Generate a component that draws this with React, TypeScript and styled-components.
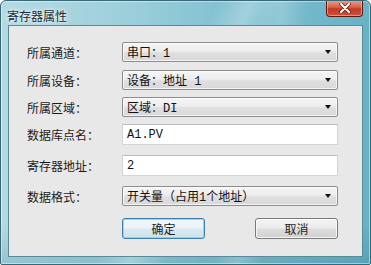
import React from 'react';
import styled, { createGlobalStyle } from 'styled-components';

const GlobalStyle = createGlobalStyle`
  html, body {
    margin: 0;
    padding: 0;
    background: #ffffff;
  }
  * {
    box-sizing: border-box;
  }
`;

const cjk = `"Noto Sans CJK SC", "Noto Sans", sans-serif`;
const mono = `"Liberation Mono", "Noto Sans CJK SC", monospace`;

const Window = styled.div`
  width: 371px;
  height: 265px;
  display: flex;
  flex-direction: column;
  border: 1px solid #3a6775;
  border-radius: 6px 6px 2px 2px;
  overflow: hidden;
  background:
    linear-gradient(115deg, rgba(255, 255, 255, 0) 44%, rgba(255, 255, 255, 0.28) 51%, rgba(255, 255, 255, 0) 58%),
    linear-gradient(100deg, rgba(255, 255, 255, 0) 62%, rgba(255, 255, 255, 0.2) 68%, rgba(255, 255, 255, 0) 74%),
    linear-gradient(180deg, rgba(0, 0, 0, 0) 85%, rgba(20, 90, 110, 0.18) 100%),
    linear-gradient(90deg, #b3dae3 0%, #9ccfdb 35%, #82c1d1 60%, #68b2c6 100%);
  box-shadow: inset 0 0 0 1px rgba(255, 255, 255, 0.45);
`;

const TitleBar = styled.div`
  height: 24px;
  display: flex;
  align-items: flex-start;
  padding-left: 6px;
  padding-right: 7px;
`;

const Title = styled.div`
  font-family: ${cjk};
  font-size: 12px;
  line-height: 14px;
  margin-top: 8px;
  color: #1a2a30;
  text-shadow: 0 0 6px rgba(255, 255, 255, 0.9), 0 0 3px rgba(255, 255, 255, 0.9);
`;

const CloseButton = styled.div`
  margin-left: auto;
  margin-top: -1px;
  width: 37px;
  height: 17px;
  display: flex;
  align-items: center;
  justify-content: center;
  border: 1px solid #5b1b12;
  border-top: none;
  border-radius: 0 0 4px 4px;
  background: linear-gradient(#eba597 0%, #d6604a 45%, #c13a22 55%, #cf5038 100%);
  box-shadow: inset 0 0 0 1px rgba(255, 210, 200, 0.5);
`;

const Client = styled.div`
  flex: 1;
  margin: 0 7px 7px 7px;
  background: #e8e8e8;
  border: 1px solid #5a8a97;
  padding: 16px 0 0 18px;
  display: flex;
  flex-direction: column;
`;

const Row = styled.div<{ $space: number }>`
  display: flex;
  align-items: center;
  margin-top: ${({ $space }) => $space}px;
`;

const Label = styled.div`
  width: 95px;
  font-family: ${cjk};
  font-size: 12px;
  color: #1a1a1a;
  white-space: nowrap;
`;

const Combo = styled.div`
  width: 216px;
  height: 20px;
  display: flex;
  align-items: center;
  padding: 0 6px 0 4px;
  border: 1px solid #8c8c8c;
  border-radius: 2px;
  background: linear-gradient(#f5f5f5 0%, #ededed 45%, #dfdfdf 55%, #d8d8d8 100%);
  box-shadow: inset 0 0 0 1px rgba(255, 255, 255, 0.7);
`;

const Value = styled.span`
  flex: 1;
  font-family: ${mono};
  font-size: 12px;
  color: #111;
  white-space: pre;
`;

const Arrow = styled.span`
  width: 0;
  height: 0;
  border-left: 3px solid transparent;
  border-right: 3px solid transparent;
  border-top: 4px solid #111;
`;

const TextBox = styled.div`
  width: 216px;
  height: 21px;
  display: flex;
  align-items: center;
  padding-left: 4px;
  background: #ffffff;
  border: 1px solid #d2d4d8;
  border-top-color: #b8bcc2;
`;

const ButtonRow = styled.div`
  margin-top: 12px;
  margin-left: 95px;
  width: 216px;
  display: flex;
  justify-content: space-between;
`;

const Button = styled.div<{ $focused?: boolean }>`
  width: 83px;
  height: 21px;
  display: flex;
  align-items: center;
  justify-content: center;
  font-family: ${cjk};
  font-size: 12px;
  color: #1e1e1e;
  border-radius: 3px;
  border: 1px solid ${({ $focused }) => ($focused ? '#3c7fb1' : '#7a7a7a')};
  background: ${({ $focused }) =>
    $focused
      ? 'linear-gradient(#f3f8fb 0%, #eaf3f8 45%, #dae9f1 55%, #cfe2ec 100%)'
      : 'linear-gradient(#f4f4f4 0%, #ececec 45%, #dddddd 55%, #d1d1d1 100%)'};
  box-shadow: inset 0 0 0 1px
    ${({ $focused }) => ($focused ? 'rgba(120, 210, 240, 0.8)' : 'rgba(255, 255, 255, 0.75)')};
`;

type Field = {
  label: string;
  value: string;
  kind: 'combo' | 'text';
  space: number;
};

const fields: Field[] = [
  { label: '所属通道：', value: '串口：1', kind: 'combo', space: 0 },
  { label: '所属设备：', value: '设备：地址 1', kind: 'combo', space: 8 },
  { label: '所属区域：', value: '区域：DI', kind: 'combo', space: 7 },
  { label: '数据库点名：', value: 'A1.PV', kind: 'text', space: 7 },
  { label: '寄存器地址：', value: '2', kind: 'text', space: 10 },
  { label: '数据格式：', value: '开关量（占用1个地址）', kind: 'combo', space: 10 },
];

const CloseIcon = () => (
  <svg width="12" height="10" viewBox="0 0 12 10">
    <path d="M2 1 L10 9 M10 1 L2 9" stroke="#5a1a10" strokeWidth="3.4" strokeLinecap="round" />
    <path d="M2 1 L10 9 M10 1 L2 9" stroke="#ffffff" strokeWidth="2" strokeLinecap="round" />
  </svg>
);

export default function App() {
  return (
    <>
      <GlobalStyle />
      <Window>
        <TitleBar>
          <Title>寄存器属性</Title>
          <CloseButton>
            <CloseIcon />
          </CloseButton>
        </TitleBar>
        <Client>
          {fields.map((f) => (
            <Row key={f.label} $space={f.space}>
              <Label>{f.label}</Label>
              {f.kind === 'combo' ? (
                <Combo>
                  <Value>{f.value}</Value>
                  <Arrow />
                </Combo>
              ) : (
                <TextBox>
                  <Value>{f.value}</Value>
                </TextBox>
              )}
            </Row>
          ))}
          <ButtonRow>
            <Button $focused>确定</Button>
            <Button>取消</Button>
          </ButtonRow>
        </Client>
      </Window>
    </>
  );
}
